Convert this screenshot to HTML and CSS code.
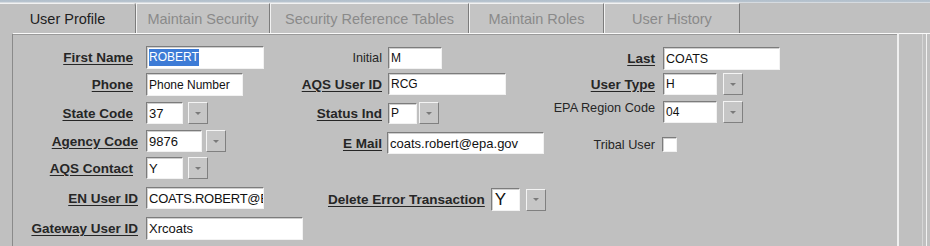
FILE: index.html
```html
<!DOCTYPE html>
<html>
<head>
<meta charset="utf-8">
<link rel="stylesheet" href="styles.css">
</head>
<body>
<div class="topstrip"></div>
<div class="tabs">
  <div class="tab active t136">User Profile</div>
  <div class="tab t134">Maintain Security</div>
  <div class="tab t199">Security Reference Tables</div>
  <div class="tab t135">Maintain Roles</div>
  <div class="tab t136">User History</div>
</div>
<div class="main">
  <div class="panel">
    <div class="col col-left">
      <div class="row">
        <span class="lbl lbl-left">First Name</span>
        <div class="field w118 h23"><span class="sel">ROBERT</span></div>
      </div>
      <div class="row">
        <span class="lbl lbl-left">Phone</span>
        <div class="field w97 h23">Phone Number</div>
      </div>
      <div class="row">
        <span class="lbl lbl-left">State Code</span>
        <div class="field w37 big">37</div>
        <div class="drop"></div>
      </div>
      <div class="row">
        <span class="lbl lbl-left near">Agency Code</span>
        <div class="field w56 big">9876</div>
        <div class="drop g4"></div>
      </div>
      <div class="row">
        <span class="lbl lbl-left">AQS Contact</span>
        <div class="field w37 big">Y</div>
        <div class="drop"></div>
      </div>
      <div class="row">
        <span class="lbl lbl-left near">EN User ID</span>
        <div class="field w118 narrow">COATS.ROBERT@EPA.GOV</div>
      </div>
      <div class="row">
        <span class="lbl lbl-left near">Gateway User ID</span>
        <div class="field w157 h23 big">Xrcoats</div>
      </div>
    </div>

    <div class="col col-mid">
      <div class="row">
        <span class="plain lbl-mid">Initial</span>
        <div class="field w54">M</div>
      </div>
      <div class="row">
        <span class="lbl lbl-mid">AQS User ID</span>
        <div class="field w118">RCG</div>
      </div>
      <div class="row">
        <span class="lbl lbl-mid">Status Ind</span>
        <div class="field w29 h21">P</div>
        <div class="drop g2"></div>
      </div>
      <div class="row">
        <span class="lbl lbl-mid tight">E Mail</span>
        <div class="field w157 big">coats.robert@epa.gov</div>
      </div>
      <div class="row row-delete">
        <span class="lbl">Delete Error Transaction</span>
        <div class="field w29 h23 huge">Y</div>
        <div class="drop g6"></div>
      </div>
    </div>

    <div class="col col-right">
      <div class="row">
        <span class="lbl lbl-right">Last</span>
        <div class="field w117 h23 mid">COATS</div>
      </div>
      <div class="row">
        <span class="lbl lbl-right">User Type</span>
        <div class="field w54">H</div>
        <div class="drop g6"></div>
      </div>
      <div class="row">
        <span class="plain lbl-right high">EPA Region Code</span>
        <div class="field w54">04</div>
        <div class="drop g6"></div>
      </div>
      <div class="row">
        <span class="plain lbl-right">Tribal User</span>
        <div class="check"></div>
      </div>
    </div>
  </div>
  <div class="side"></div>
</div>
</body>
</html>
```

FILE: styles.css
```css
body {
  margin: 0;
  width: 930px;
  height: 246px;
  overflow: hidden;
  background: #c0c0c0;
  font-family: "Liberation Sans", Arial, sans-serif;
  color: #1e1e1e;
}

.topstrip {
  height: 3px;
  background: linear-gradient(#b2bfcc, #b9c4cf 66%, #d6dbe0 66%);
}

.tabs {
  display: flex;
  height: 30px;
}

.tab {
  box-sizing: border-box;
  height: 30px;
  border-top: 1px solid #f2f2f2;
  border-left: 1px solid #f2f2f2;
  border-right: 1px solid #7c7c7c;
  display: flex;
  align-items: center;
  justify-content: center;
  font-size: 14.5px;
  color: #8a8a8a;
  background: #c4c4c4;
  padding-top: 1px;
}

.tab.active {
  border-left: none;
  border-top-right-radius: 3px;
  background: #c0c0c0;
  color: #1e1e1e;
}

.t134 { width: 134px; }
.t135 { width: 135px; }
.t136 { width: 136px; }
.t199 { width: 199px; }

.main {
  display: flex;
  height: 213px;
}

.panel {
  box-sizing: border-box;
  margin-left: 12px;
  width: 887px;
  border-top: 1px solid #fafafa;
  border-left: 1px solid #8a8a8a;
  border-right: 2px solid #f0f0f0;
  box-shadow: inset 0 1px 0 #9a9a9a;
  display: flex;
  padding-top: 12px;
}

.side {
  flex: 1;
  border-top: 1px solid #fafafa;
  background: linear-gradient(to right, #c0c0c0 0 23px, #d6d6d6 23px 24px, #c0c0c0 24px 27px, #f2f2f2 27px 28px, #c0c0c0 28px);
}

.col {
  display: grid;
  align-items: start;
  align-content: start;
}

.col-left {
  width: 277px;
  grid-template-rows: 27px 29px 28px 27px 30px 30px 23px;
}

.col-mid {
  width: 250px;
  padding-top: 1px;
  grid-template-rows: 26px 29px 30px 56px 23px;
}

.col-right {
  flex: 1;
  padding-top: 1px;
  grid-template-rows: 26px 28px 36px 15px;
}

.row {
  display: flex;
  align-items: center;
}

.lbl {
  font-size: 13.5px;
  font-weight: bold;
  color: #262626;
  text-decoration: underline;
  text-underline-offset: 2px;
  white-space: nowrap;
}

.plain {
  font-size: 12.7px;
  color: #262626;
  white-space: nowrap;
}

.lbl-left {
  width: 120px;
  margin-right: 13px;
  text-align: right;
}

.lbl-left.near {
  width: 125px;
  margin-right: 8px;
}

.lbl-mid {
  width: 92px;
  margin-right: 6px;
  text-align: right;
}

.lbl-mid.tight {
  margin-right: 5px;
}

.lbl-right {
  width: 115px;
  margin-right: 8px;
  text-align: right;
}

.lbl-right.high {
  align-self: flex-start;
  line-height: 14px;
}

.row-delete {
  padding-left: 38px;
}

.row-delete .lbl {
  margin-right: 6px;
}

.field {
  box-sizing: border-box;
  height: 22px;
  background: #fff;
  border: 1px solid;
  border-color: #7c7c7c #f2f2f2 #f2f2f2 #7c7c7c;
  box-shadow: inset 1px 1px 0 #cfcfcf;
  font-size: 12px;
  color: #111;
  padding-left: 2px;
  display: flex;
  align-items: center;
  overflow: hidden;
  white-space: nowrap;
}

.field.big { font-size: 13px; }
.field.narrow { font-size: 13px; letter-spacing: -0.25px; }
.field.mid { font-size: 12.5px; }
.field.huge { font-size: 17px; padding-left: 3px; }

.h21 { height: 21px; }
.h23 { height: 23px; }

.w29 { width: 29px; }
.w37 { width: 37px; }
.w54 { width: 54px; }
.w56 { width: 56px; }
.w97 { width: 97px; }
.w117 { width: 117px; }
.w118 { width: 118px; }
.w157 { width: 157px; }

.sel {
  background: #3d7bd6;
  color: #fff;
  line-height: 17px;
}

.drop {
  box-sizing: border-box;
  width: 20px;
  height: 22px;
  margin-left: 5px;
  border: 1px solid;
  border-color: #f4f4f4 #808080 #808080 #f4f4f4;
  background: #c6c6c6;
  display: flex;
  align-items: center;
  justify-content: center;
}

.drop::after {
  content: "";
  border-left: 3px solid transparent;
  border-right: 3px solid transparent;
  border-top: 3px solid #7a7a7a;
}

.drop.g2 { margin-left: 2px; }
.drop.g4 { margin-left: 4px; }
.drop.g6 { margin-left: 6px; }

.check {
  box-sizing: border-box;
  width: 15px;
  height: 15px;
  background: #fff;
  border: 1px solid;
  border-color: #7c7c7c #f2f2f2 #f2f2f2 #7c7c7c;
  box-shadow: inset 1px 1px 0 #cfcfcf;
  margin-left: -1px;
}
```
